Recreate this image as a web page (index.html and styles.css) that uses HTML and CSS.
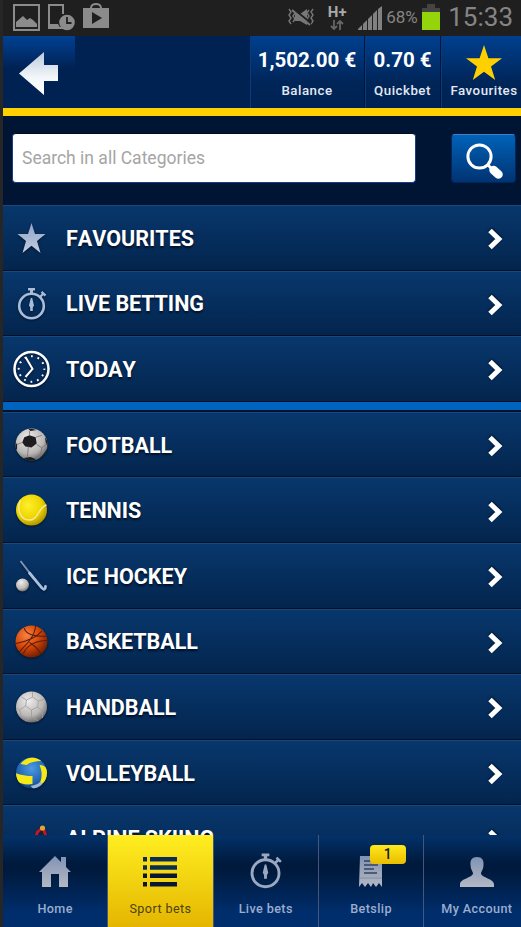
FILE: index.html
```html
<!DOCTYPE html>
<html lang="en">
<head>
    <meta charset="UTF-8">
    <meta name="viewport" content="width=device-width, initial-scale=1.0">
    <title>Sport bets</title>
    <link rel="stylesheet" href="styles.css">
</head>
<body>
    <!-- shared gradients and icons -->
    <svg class="defs" width="0" height="0">
        <defs>
            <linearGradient id="silver" x1="0" y1="0" x2="0" y2="1">
                <stop offset="0" stop-color="#8ea3c6"/>
                <stop offset="1" stop-color="#c3cde0"/>
            </linearGradient>
            <linearGradient id="steel" x1="0" y1="0" x2="0" y2="1">
                <stop offset="0" stop-color="#8093b4"/>
                <stop offset="1" stop-color="#b4b8c3"/>
            </linearGradient>
            <linearGradient id="arrow" x1="0" y1="0" x2="0" y2="1">
                <stop offset="0" stop-color="#b9cbdd"/>
                <stop offset="0.6" stop-color="#f4f7fa"/>
                <stop offset="1" stop-color="#fff"/>
            </linearGradient>
            <radialGradient id="white-ball" cx="0.4" cy="0.3" r="0.75">
                <stop offset="0" stop-color="#eeeded"/>
                <stop offset="0.65" stop-color="#b9b6b4"/>
                <stop offset="1" stop-color="#5e5d60"/>
            </radialGradient>
            <radialGradient id="tennis-ball" cx="0.4" cy="0.35" r="0.7">
                <stop offset="0" stop-color="#fff02b"/>
                <stop offset="0.6" stop-color="#ecd500"/>
                <stop offset="1" stop-color="#a98c00"/>
            </radialGradient>
            <radialGradient id="basket-ball" cx="0.35" cy="0.3" r="0.75">
                <stop offset="0" stop-color="#f88345"/>
                <stop offset="0.5" stop-color="#d94909"/>
                <stop offset="1" stop-color="#6b1c02"/>
            </radialGradient>
            <radialGradient id="blue-ball" cx="0.5" cy="0.35" r="0.7">
                <stop offset="0" stop-color="#4d9be2"/>
                <stop offset="0.7" stop-color="#1c5fae"/>
                <stop offset="1" stop-color="#0b2e66"/>
            </radialGradient>
            <clipPath id="ball-clip"><circle cx="16" cy="16" r="15.5"/></clipPath>
        </defs>
        <symbol id="chevron" viewBox="0 0 16 24">
            <path d="M3 3.500 11.800 12 3 20.500" fill="none" stroke="#fff" stroke-width="5"/>
        </symbol>
        <symbol id="stopwatch" viewBox="0 0 30 33">
            <circle cx="15" cy="19" r="12.300" fill="none" stroke="currentColor" stroke-width="2.600"/>
            <path d="M11.500 1h7v2.500h-2v4h-3v-4h-2z" fill="currentColor"/>
            <path d="M23.500 10 27 6.500M25 4.800l4 3.800" stroke="currentColor" stroke-width="2.300"/>
            <path d="M14.300 11h1.400l1.800 7.500-1.200 2v3.500h-2.600v-3.500l-1.200-2z" fill="currentColor"/>
        </symbol>
    </svg>

    <div class="phone">
        <div class="status-bar">
            <svg class="status-left" width="103" height="32" viewBox="0 0 103 32">
                <g fill="none" stroke="#8b8b8b" stroke-width="2">
                    <path d="M5 5h25v25H5z"/>
                    <path d="M55 28H40V5h14v9"/>
                </g>
                <path d="M7 27v-5l7-6 4 4 3-2 3 2 4 4v3zM40 24h9l3 5H40z" fill="#8b8b8b"/>
                <circle cx="58" cy="22.500" r="7.800" fill="#8b8b8b"/>
                <path d="M58 17v6h4.500" fill="none" stroke="#1f1f1f" stroke-width="1.800"/>
                <path d="M74 8h26v20H74z" fill="#8b8b8b"/>
                <path d="M82 8c0-5.500 10-5.500 10 0" fill="none" stroke="#8b8b8b" stroke-width="2"/>
                <path d="M83 12v12l10-6z" fill="#1f1f1f"/>
            </svg>
            <div class="status-right">
                <svg class="vibrate" width="28" height="20" viewBox="0 0 28 20">
                    <path d="M2 2l2 3-2 3 2 3-2 3 2 3M6 3l2 3-2 3 2 3-2 3M26 2l-2 3 2 3-2 3 2 3-2 3M22 3l-2 3 2 3-2 3 2 3" fill="none" stroke="#777" stroke-width="1.400"/>
                    <path d="M8 7h5l7-5v16l-7-4H8z" fill="#777"/>
                    <path d="M5 1l19 15" stroke="#1f1f1f" stroke-width="2"/>
                    <path d="M5 3l18 15" stroke="#777" stroke-width="1.800"/>
                </svg>
                <div class="network">
                    <span>H+</span>
                    <svg width="14" height="11" viewBox="0 0 14 11">
                        <path d="M4 0v8M1 6l3 3 3-3M10 10V2M7 4l3-3 3 3" fill="none" stroke="#666" stroke-width="1.800"/>
                    </svg>
                </div>
                <svg class="signal" width="24" height="24" viewBox="0 0 24 24">
                    <path d="M0 24v-1l4-4v5zM5 24v-6l4-4v10zM10 24V13l4-4v15zM15 24V8l4-4v20zM20 24V3l4-3v24z" fill="#818181"/>
                </svg>
                <span class="percent">68%</span>
                <svg class="battery" width="18" height="26" viewBox="0 0 18 26">
                    <path d="M5 0h8v4h5v4H0V4h5z" fill="#444"/>
                    <path d="M0 8h18v18H0z" fill="#93d50a"/>
                </svg>
                <span class="time">15:33</span>
            </div>
        </div>

        <div class="header">
            <div class="back">
                <svg width="39" height="43" viewBox="0 0 39 43">
                    <path d="M0 21.500 25 0v13h14v16H25v14z" fill="url(#arrow)"/>
                </svg>
            </div>
            <div class="header-item balance">
                <div class="amount">1,502.00 €</div>
                <div class="caption">Balance</div>
            </div>
            <div class="header-item quickbet">
                <div class="amount">0.70 €</div>
                <div class="caption">Quickbet</div>
            </div>
            <div class="header-item favourites">
                <svg width="36" height="36" viewBox="0 0 36 36">
                    <path d="M18 0l4.400 13.200H36L25 21.500 29.200 35 18 26.800 6.800 35 11 21.500 0 13.200h13.600z" fill="#ffd000"/>
                </svg>
                <div class="caption">Favourites</div>
            </div>
        </div>

        <div class="search">
            <input type="text" class="search-input" placeholder="Search in all Categories">
            <button class="search-button" aria-label="Search">
                <svg width="38" height="37" viewBox="0 0 38 37">
                    <circle cx="13.500" cy="13.500" r="11.600" fill="none" stroke="#fff" stroke-width="3"/>
                    <path d="M22 22l4 4" stroke="#fff" stroke-width="3"/>
                    <path d="M27.500 27l5 4.500" stroke="#fff" stroke-width="8.500" stroke-linecap="round"/>
                </svg>
            </button>
        </div>

        <div class="list">
            <div class="row">
                <svg class="icon" width="28" height="30" viewBox="0 0 28 30">
                    <path d="M14 0l3.500 11H28l-8.500 7L23 30l-9-7.300L5 30l3.500-12L0 11h10.500z" fill="url(#silver)"/>
                </svg>
                <span class="label">FAVOURITES</span>
                <svg class="chevron" width="16" height="24"><use href="#chevron"/></svg>
            </div>
            <div class="row">
                <svg class="icon live" width="30" height="33"><use href="#stopwatch"/></svg>
                <span class="label">LIVE BETTING</span>
                <svg class="chevron" width="16" height="24"><use href="#chevron"/></svg>
            </div>
            <div class="row last">
                <svg class="icon" width="38" height="38" viewBox="0 0 38 38">
                    <circle cx="19" cy="19" r="17" fill="none" stroke="#fff" stroke-width="2.500"/>
                    <circle cx="19" cy="19" r="12.800" fill="none" stroke="#fff" stroke-width="2" stroke-dasharray="1.800 4.902" stroke-dashoffset="0.900"/>
                    <path d="M13 7l7 12-7 8" fill="none" stroke="#fff" stroke-width="2"/>
                </svg>
                <span class="label">TODAY</span>
                <svg class="chevron" width="16" height="24"><use href="#chevron"/></svg>
            </div>
        </div>

        <div class="list sports">
            <div class="row">
                <svg class="icon" width="33" height="33" viewBox="0 0 32 32">
                    <circle cx="16" cy="16" r="15.500" fill="url(#white-ball)"/>
                    <g clip-path="url(#ball-clip)" fill="#1d1d20">
                        <path d="M9 9l5-2 6 2 1 6-5 4-6-1-3-4z"/>
                        <path d="M9 29l6-1 5 2-2 3H9zM27 26l5-7v9l-7 4-2-2zM29 9l3 4v5l-2-3zM0 13l2 3v5l-3-2zM12 0l5 1 4 1-6 1z"/>
                    </g>
                    <path d="M21 16l5 3-1 6M26 19l5-4M13 18l-1 10M14 7V3M7 14l-5 2M20 9l6-2M25 25l-6 4" fill="none" stroke="#77757a" stroke-width="0.800"/>
                </svg>
                <span class="label">FOOTBALL</span>
                <svg class="chevron" width="16" height="24"><use href="#chevron"/></svg>
            </div>
            <div class="row">
                <svg class="icon" width="32" height="32" viewBox="0 0 32 32">
                    <circle cx="16" cy="16" r="15.500" fill="url(#tennis-ball)"/>
                    <path d="M5 6C1 14 4 26 14 26 23 26 23 13 31 11" fill="none" stroke="#fbe6a0" stroke-width="1.400"/>
                </svg>
                <span class="label">TENNIS</span>
                <svg class="chevron" width="16" height="24"><use href="#chevron"/></svg>
            </div>
            <div class="row">
                <svg class="icon" width="32" height="32" viewBox="0 0 32 32">
                    <path d="M5 1l10 13" stroke="#7d93b5" stroke-width="2"/>
                    <path d="M14 13l12.500 15c1.500 2 3.500 1.500 3.500-1.500" fill="none" stroke="#a9c0df" stroke-width="2.800" stroke-linecap="round"/>
                    <circle cx="7" cy="25" r="6.500" fill="url(#white-ball)"/>
                </svg>
                <span class="label">ICE HOCKEY</span>
                <svg class="chevron" width="16" height="24"><use href="#chevron"/></svg>
            </div>
            <div class="row">
                <svg class="icon" width="33" height="33" viewBox="0 0 32 32">
                    <circle cx="16" cy="16" r="15.500" fill="url(#basket-ball)"/>
                    <path d="M9 3c1 5 8 8 21 8M1 18c10-2 20-6 25-12M20 1C19 12 10 20 4 26M14 17c5 3 9 7 11 11M8 28c3-8 12-13 23-13" fill="none" stroke="#5a1c0a" stroke-width="1"/>
                </svg>
                <span class="label">BASKETBALL</span>
                <svg class="chevron" width="16" height="24"><use href="#chevron"/></svg>
            </div>
            <div class="row">
                <svg class="icon" width="32" height="32" viewBox="0 0 32 32">
                    <circle cx="16" cy="16" r="15.500" fill="url(#white-ball)"/>
                    <path d="M11 9l6-3 6 4-1 6-6 3-6-4zM11 9L6 6M17 6V1M23 10l6-2M22 16l5 4v7M16 19v7l-6 4M10 15l-6 4 2 7M16 26l7 4M27 20l4-2M4 19l-3-3" fill="none" stroke="#a09b97" stroke-width="0.800"/>
                </svg>
                <span class="label">HANDBALL</span>
                <svg class="chevron" width="16" height="24"><use href="#chevron"/></svg>
            </div>
            <div class="row">
                <svg class="icon" width="32" height="32" viewBox="0 0 32 32">
                    <circle cx="16" cy="16" r="15.500" fill="url(#blue-ball)"/>
                    <g clip-path="url(#ball-clip)" fill="#f7e916">
                        <path d="M5 7C9 2 16-1 23 1l3 3c-6 0-11 1-15 4zM0 16c5 2 11 3 17 3v8c-6 1-12 0-16-3zM24 8c5 0 8 3 8 8 0 6-3 10-9 13 4-8 4-14 1-21z"/>
                        <path d="M15 29c6-1 9-3 10-5l2 5-8 4z" fill="#9fb7d2"/>
                    </g>
                </svg>
                <span class="label">VOLLEYBALL</span>
                <svg class="chevron" width="16" height="24"><use href="#chevron"/></svg>
            </div>
            <div class="row">
                <svg class="icon" width="32" height="32" viewBox="0 0 32 32">
                    <path d="M28 7l3 9M26 7l-4 3-2 6" fill="none" stroke="#c4152b" stroke-width="3"/>
                    <path d="M25 9l3 5-7 6 6 8" fill="none" stroke="#23232b" stroke-width="2"/>
                    <circle cx="27" cy="6" r="2.600" fill="#e0a92e"/>
                </svg>
                <span class="label">ALPINE SKIING</span>
                <svg class="chevron" width="16" height="24"><use href="#chevron"/></svg>
            </div>
        </div>

        <div class="tab-bar">
            <div class="tab">
                <svg width="32" height="33" viewBox="0 0 32 33">
                    <path d="M0 17 16 1l6 6V2h5v10l5 5h-3v15h-9V19h-8v13H3V17z" fill="url(#steel)"/>
                </svg>
                <span>Home</span>
            </div>
            <div class="tab active">
                <svg width="34" height="33" viewBox="0 0 34 33">
                    <path d="M0 2h4v4.500H0zM7 2h27v4.500H7zM0 10.300h4v4.500H0zM7 10.300h27v4.500H7z" fill="#0c2d52"/>
                    <path d="M0 18.600h4v4.500H0zM7 18.600h27v4.500H7zM0 27h4v4.500H0zM7 27h27v4.500H7z" fill="#091733"/>
                </svg>
                <span>Sport bets</span>
            </div>
            <div class="tab">
                <svg class="watch" width="33" height="37"><use href="#stopwatch"/></svg>
                <span>Live bets</span>
            </div>
            <div class="tab">
                <svg width="24" height="33" viewBox="0 0 24 33">
                    <path d="M1 1h22v31l-3-4-3 4-3-4-2 4-3-4-3 4-3-4-3 4z" fill="url(#steel)"/>
                    <path d="M5 6h10M5 10h14M5 14h10M5 18h13" stroke="#34435f" stroke-width="1.600"/>
                    <path d="M1 23h22" stroke="#7f8898" stroke-width="0.800"/>
                </svg>
                <span>Betslip</span>
                <div class="badge">1</div>
            </div>
            <div class="tab">
                <svg width="34" height="33" viewBox="0 0 34 33">
                    <path d="M17 2c5 0 7 3 6.500 8 0 4-2 6-2.500 8 0 5 12 5 13 11v3H0v-3c1-6 13-6 13-11-.5-2-2.500-4-2.500-8C10 5 12 2 17 2z" fill="url(#steel)"/>
                </svg>
                <span>My Account</span>
            </div>
        </div>
    </div>
</body>
</html>
```
FILE: styles.css
```css
* {
    box-sizing: border-box;
}
body {
    margin: 0;
    background-color: #262626;
    font-family: Roboto, sans-serif;
    color: #fff;
    overflow: hidden;
}
svg {
    display: block;
    flex-shrink: 0;
}
.defs {
    position: absolute;
}
.phone {
    display: flex;
    flex-direction: column;
    height: 927px;
    padding-left: 3px;
}

/* status bar */
.status-bar {
    display: flex;
    justify-content: space-between;
    height: 36px;
    flex-shrink: 0;
    padding: 0 8px 0 6px;
    background-color: #1f1f1f;
    color: #858585;
}
.status-right {
    display: flex;
    align-items: flex-start;
}
.vibrate {
    margin: 7px 12px 0 0;
}
.network {
    display: flex;
    flex-direction: column;
    align-items: center;
    width: 20px;
    margin-right: 11px;
    padding-top: 4px;
    font-size: 15px;
    font-weight: bold;
    line-height: 16px;
    color: #aaa;
}
.signal {
    margin: 6px 4px 0 0;
}
.percent {
    width: 34px;
    font-size: 17px;
    line-height: 35px;
    white-space: nowrap;
}
.battery {
    margin: 4px 8px 0 2px;
}
.time {
    font-size: 26px;
    line-height: 34px;
}

/* header */
.header {
    display: flex;
    height: 80px;
    flex-shrink: 0;
    background-color: #002253;
    border-bottom: 8px solid #ffd000;
}
.back {
    width: 72px;
    margin-right: auto;
    padding: 16px 0 0 16px;
    background: linear-gradient(#004194, #002253 45%);
}
.header-item {
    display: flex;
    flex-direction: column;
    align-items: center;
    background: linear-gradient(#00408f, #002558 65%, #002253);
    border-right: 1px solid #001539;
    box-shadow: inset 1px 0 #0b3a7c;
}
.balance {
    width: 115px;
}
.quickbet {
    width: 76px;
}
.favourites {
    width: 80px;
    padding: 9px 0 0 6px;
    border-right: none;
}
.amount {
    padding-top: 12px;
    font-size: 20.5px;
    font-weight: bold;
    line-height: 25px;
    white-space: nowrap;
}
.caption {
    margin-top: 9px;
    font-size: 13.3px;
    font-weight: 500;
    line-height: 18px;
    letter-spacing: 0.5px;
    color: #e3e9f4;
}
.favourites .caption {
    margin-top: 1px;
}

/* search */
.search {
    display: flex;
    justify-content: space-between;
    height: 89px;
    flex-shrink: 0;
    padding: 17px 5px 0 9px;
    background-color: #001533;
}
.search-input {
    width: 404px;
    height: 50px;
    padding: 0 9px 1px;
    border: 1px solid #1c3c8a;
    border-top-color: #000c20;
    border-radius: 4px;
    background-color: #fff;
    font-family: inherit;
    font-size: 17.5px;
}
.search-input::placeholder {
    color: #a5a5a5;
}
.search-button {
    display: flex;
    width: 65px;
    height: 49px;
    margin-top: 1px;
    padding: 8px 0 0 14px;
    border: 1px solid #00275a;
    border-top-color: #3d80c4;
    border-radius: 4px;
    background: linear-gradient(#0062b8, #003372);
}

/* categories */
.list {
    flex-shrink: 0;
}
.sports {
    flex: 1;
    min-height: 0;
    overflow: hidden;
    border-top: 8px solid #0063bf;
    background-color: #00122b;
    padding-top: 2px;
}
.row {
    display: flex;
    align-items: center;
    height: 65.6px;
    padding-right: 18px;
    border-top: 1px solid #1b487c;
    border-bottom: 1.5px solid #001128;
    background: linear-gradient(#08376d, #03254d);
}
.icon {
    width: 57px;
    filter: drop-shadow(0 1px 1px rgba(0, 0, 0, 0.5));
}
.live {
    color: #a9bddb;
}
.label {
    padding: 1px 0 0 6px;
    font-size: 21.5px;
    font-weight: 700;
    font-kerning: none;
    text-shadow: 0 2px 2px #001128;
}
.chevron {
    margin: 3px 0 0 auto;
    filter: drop-shadow(0 -1px 1px #001128);
}

/* bottom navigation */
.tab-bar {
    display: flex;
    height: 92px;
    flex-shrink: 0;
    overflow: hidden;
    background: linear-gradient(#033269, #001a3e 30%, #001a3e 40%, #002e6c 85%);
}
.tab {
    position: relative;
    display: flex;
    flex-direction: column;
    align-items: center;
    flex-shrink: 0;
    width: 105.3px;
    padding-top: 20px;
    border-right: 1px solid #45567a;
    font-size: 12.6px;
    font-weight: 500;
    letter-spacing: 0.4px;
    color: #9badcf;
    white-space: nowrap;
}
.tab:last-child {
    border-right: none;
}
.tab span {
    margin-top: 12px;
    line-height: 17px;
}
.tab.active {
    background: linear-gradient(#ffee20, #f3d512 45%, #e5b500);
    font-weight: 400;
    color: #4b430d;
}
.tab .watch {
    margin: -3px 0 -1px;
    color: #9aa8c1;
}
.badge {
    position: absolute;
    top: 10px;
    left: 51px;
    width: 36px;
    height: 19px;
    border-radius: 4px;
    background: linear-gradient(#ffe81c, #e9bd00);
    font-size: 14px;
    line-height: 19px;
    text-align: center;
    color: #151b2b;
}
```
